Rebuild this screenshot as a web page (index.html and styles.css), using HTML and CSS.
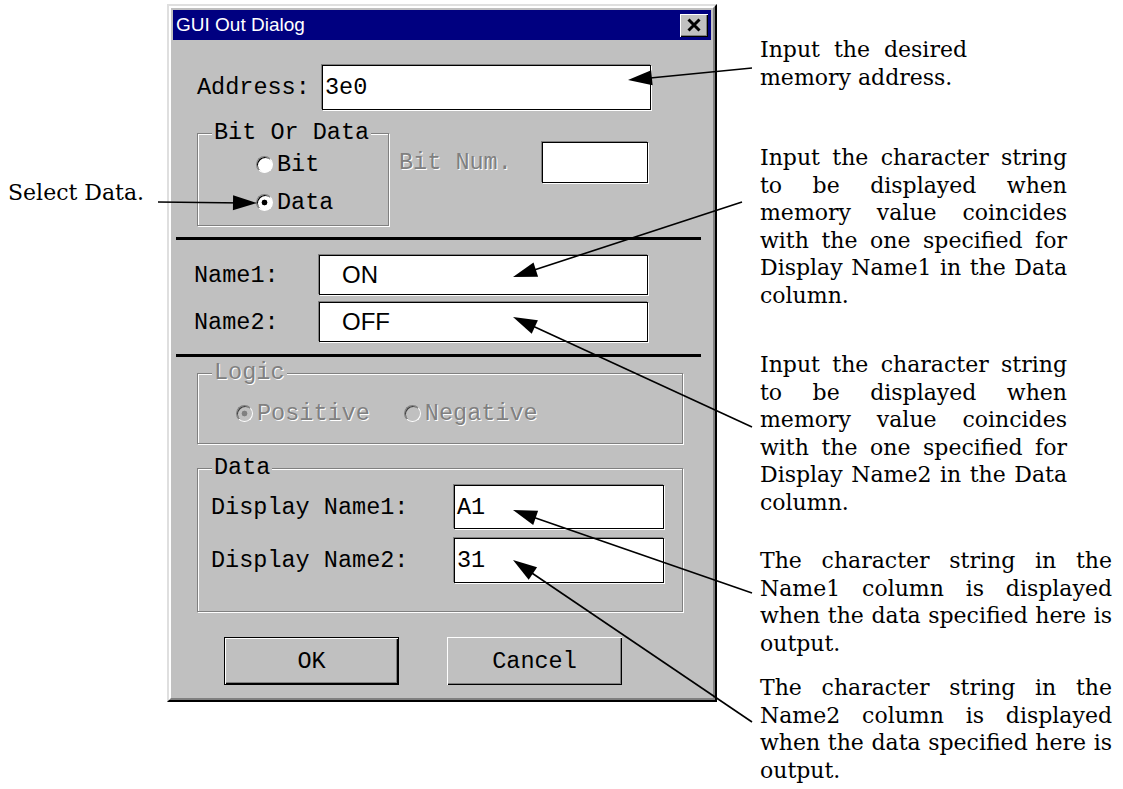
FILE: index.html
```html
<!DOCTYPE html>
<html lang="en">
<head>
    <meta charset="UTF-8">
    <title>GUI Out Dialog</title>
    <link rel="stylesheet" href="styles.css">
</head>
<body>
<div class="figure">
    <div class="side-note">Select Data.</div>

    <div class="dialog">
        <div class="dialog-inner">
            <div class="caption">
                <span>GUI Out Dialog</span>
                <span class="close-btn">
                    <svg width="16" height="14" viewBox="0 0 16 14"><path d="M2.5 1.5 L13.5 12.5 M13.5 1.5 L2.5 12.5" stroke="#000" stroke-width="3" fill="none"/></svg>
                </span>
            </div>
            <div class="dialog-body">
                <div class="row row-address">
                    <span class="label label-address">Address:</span>
                    <div class="edit edit-address">3e0</div>
                </div>

                <div class="row row-bit">
                    <div class="group group-bit">
                        <span class="group-title">Bit Or Data</span>
                        <div class="radio-line"><span class="radio"></span>Bit</div>
                        <div class="radio-line"><span class="radio checked"></span>Data</div>
                    </div>
                    <div class="bitnum">
                        <span class="label label-bitnum disabled">Bit Num.</span>
                        <div class="edit edit-bitnum"></div>
                    </div>
                </div>

                <div class="rule rule-1"></div>

                <div class="row row-name row-name1">
                    <span class="label label-name">Name1:</span>
                    <div class="edit edit-name">ON</div>
                </div>
                <div class="row row-name row-name2">
                    <span class="label label-name">Name2:</span>
                    <div class="edit edit-name">OFF</div>
                </div>

                <div class="rule rule-2"></div>

                <div class="group group-logic">
                    <span class="group-title disabled">Logic</span>
                    <div class="radio-row disabled">
                        <span class="radio-item"><span class="radio checked off"></span>Positive</span>
                        <span class="radio-item"><span class="radio off"></span>Negative</span>
                    </div>
                </div>

                <div class="group group-data">
                    <span class="group-title">Data</span>
                    <div class="data-line data-line1">
                        <span class="label label-data">Display Name1:</span>
                        <div class="edit edit-data">A1</div>
                    </div>
                    <div class="data-line data-line2">
                        <span class="label label-data">Display Name2:</span>
                        <div class="edit edit-data">31</div>
                    </div>
                </div>

                <div class="buttons">
                    <div class="btn btn-default">OK</div>
                    <div class="btn">Cancel</div>
                </div>
            </div>
        </div>
    </div>

    <div class="notes">
        <div class="note note-1">
            <span class="ln ln-first">Input the desired</span>
            <span class="ln ln-end">memory address.</span>
        </div>
        <div class="note note-2">
            <span class="ln">Input the character string</span>
            <span class="ln">to be displayed when</span>
            <span class="ln">memory value coincides</span>
            <span class="ln">with the one specified for</span>
            <span class="ln">Display Name1 in the Data</span>
            <span class="ln ln-end">column.</span>
        </div>
        <div class="note note-3">
            <span class="ln">Input the character string</span>
            <span class="ln">to be displayed when</span>
            <span class="ln">memory value coincides</span>
            <span class="ln">with the one specified for</span>
            <span class="ln">Display Name2 in the Data</span>
            <span class="ln ln-end">column.</span>
        </div>
        <div class="note note-4">
            <span class="ln">The character string in the</span>
            <span class="ln">Name1 column is displayed</span>
            <span class="ln">when the data specified here is</span>
            <span class="ln ln-end">output.</span>
        </div>
        <div class="note note-5">
            <span class="ln">The character string in the</span>
            <span class="ln">Name2 column is displayed</span>
            <span class="ln">when the data specified here is</span>
            <span class="ln ln-end">output.</span>
        </div>
    </div>

    <!-- leader lines drawn over the figure -->
    <svg class="arrows" width="1123" height="789" viewBox="0 0 1123 789">
        <g stroke="#000" stroke-width="1.6">
            <line x1="752" y1="68" x2="640" y2="79"/>
            <line x1="158" y1="202" x2="245" y2="203"/>
            <line x1="742" y1="202" x2="525" y2="273"/>
            <line x1="752" y1="427" x2="524" y2="322"/>
            <line x1="752" y1="593" x2="524" y2="514"/>
            <line x1="752" y1="722" x2="523" y2="567"/>
        </g>
        <g fill="#000">
            <polygon points="628,80 651.2,70.2 652.6,85.2"/>
            <polygon points="257,203 232.9,210.3 233.1,195.3"/>
            <polygon points="513,277 533.5,262.4 538.1,276.7"/>
            <polygon points="513,317 537.9,320.2 531.7,333.8"/>
            <polygon points="513,510 538.1,510.8 533.2,525"/>
            <polygon points="513,560 537.1,567.3 528.7,579.7"/>
        </g>
    </svg>
</div>
</body>
</html>
```

FILE: styles.css
```css
* {
    margin: 0;
    padding: 0;
    box-sizing: border-box;
}
body {
    background: #fff;
    color: #000;
    font-family: "DejaVu Serif", "Liberation Serif", serif;
}
.figure {
    position: relative;
    width: 1123px;
    height: 789px;
    display: flex;
    overflow: hidden;
}
.side-note {
    width: 167px;
    flex-shrink: 0;
    padding: 179px 0 0 8px;
    font-size: 22px;
    line-height: 27.5px;
}

/* dialog window */
.dialog {
    margin-top: 4px;
    width: 550px;
    height: 698px;
    flex-shrink: 0;
    background: #c0c0c0;
    border: 2px solid;
    border-color: #dfdfdf #000 #000 #dfdfdf;
}
.dialog-inner {
    height: 100%;
    border: 2px solid;
    border-color: #fff #808080 #808080 #fff;
    padding: 2px;
    display: flex;
    flex-direction: column;
}
.caption {
    height: 30px;
    flex-shrink: 0;
    background: #000080;
    color: #fff;
    font: 19px "Liberation Sans", Arial, sans-serif;
    display: flex;
    align-items: center;
    justify-content: space-between;
    padding: 0 3px;
}
.close-btn {
    width: 28px;
    height: 23px;
    background: #c0c0c0;
    box-shadow: inset 1px 1px 0 #fff, inset -1px -1px 0 #000, inset -2px -2px 0 #808080;
    display: flex;
    align-items: center;
    justify-content: center;
}
.dialog-body {
    flex: 1;
    display: flex;
    flex-direction: column;
    font: 23.5px "Liberation Mono", "Courier New", monospace;
}
.row {
    display: flex;
    align-items: center;
}
.label {
    white-space: nowrap;
}
.disabled {
    color: #808080;
    text-shadow: 1px 1px 0 #fff;
}
.edit {
    background: #fff;
    border: 1px solid #000;
    box-shadow: -1px -1px 0 #808080, 1px 1px 0 #fff;
    display: flex;
    align-items: center;
    padding-left: 2px;
    flex-shrink: 0;
}

.row-address {
    margin: 25px 0 0 24px;
    height: 45px;
}
.label-address {
    width: 125px;
}
.edit-address {
    width: 329px;
    height: 45px;
}

/* group boxes */
.group {
    border: 1px solid #808080;
    box-shadow: inset 1px 1px 0 #fff, 1px 1px 0 #fff;
    flex-shrink: 0;
}
.group-title {
    display: block;
    width: max-content;
    margin: -13px 0 0 14px;
    padding: 0 2px;
    background: #c0c0c0;
    line-height: 24px;
}

.row-bit {
    margin: 23px 0 0 24px;
    align-items: flex-start;
}
.group-bit {
    width: 192px;
    height: 93px;
}
.radio-line {
    height: 38px;
    display: flex;
    align-items: center;
    padding-left: 58px;
}
.radio {
    width: 17px;
    height: 17px;
    flex-shrink: 0;
    margin-right: 4px;
    border-radius: 50%;
    background: #fff;
    border: 1px solid;
    border-color: #808080 #fff #fff #808080;
    box-shadow: inset 1px 1px 0 #000;
}
.radio.checked {
    background: radial-gradient(circle, #000 0 2.6px, #fff 3.2px);
}
.radio.off {
    background: #c0c0c0;
    box-shadow: inset 1px 1px 0 #404040;
}
.radio.checked.off {
    background: radial-gradient(circle, #808080 0 2.6px, #c0c0c0 3.2px);
}
.bitnum {
    display: flex;
    align-items: center;
    margin: 9px 0 0 10px;
    height: 41px;
}
.label-bitnum {
    width: 143px;
}
.edit-bitnum {
    width: 106px;
    height: 41px;
}

.rule {
    height: 3px;
    width: 525px;
    margin-left: 3px;
    background: #000;
    flex-shrink: 0;
}
.rule-1 {
    margin-top: 11px;
}
.rule-2 {
    margin-top: 12px;
}

.row-name {
    margin-left: 21px;
    height: 40px;
}
.row-name1 {
    margin-top: 15px;
}
.row-name2 {
    margin-top: 7px;
}
.label-name {
    width: 125px;
}
.edit-name {
    width: 329px;
    height: 40px;
    padding-left: 22px;
    font: 24px "Liberation Sans", Arial, sans-serif;
}

.group-logic {
    margin: 16px 0 0 24px;
    width: 486px;
    height: 71px;
}
.radio-row {
    height: 56px;
    display: flex;
    align-items: center;
    gap: 34px;
    padding-left: 38px;
}
.radio-item {
    display: flex;
    align-items: center;
}

.group-data {
    margin: 24px 0 0 24px;
    width: 486px;
    height: 144px;
}
.data-line {
    display: flex;
    align-items: center;
    padding-left: 13px;
}
.data-line1 {
    margin-top: 5px;
    height: 44px;
}
.data-line2 {
    margin-top: 9px;
    height: 45px;
}
.label-data {
    width: 243px;
}
.edit-data {
    width: 210px;
    height: 100%;
}

.buttons {
    display: flex;
    gap: 48px;
    margin: 25px 0 0 51px;
}
.btn {
    width: 175px;
    height: 48px;
    display: flex;
    align-items: center;
    justify-content: center;
    background: #c0c0c0;
    box-shadow: inset 1px 1px 0 #fff, inset -1px -1px 0 #000, inset -2px -2px 0 #808080;
}
.btn-default {
    border: 1px solid #000;
}

/* callout texts */
.notes {
    margin-left: 43px;
    font-size: 22px;
    line-height: 27.5px;
}
.ln {
    display: block;
    text-align: justify;
    text-align-last: justify;
}
.ln-end {
    text-align-last: left;
}
.note-1 {
    margin-top: 36px;
    width: 207px;
}
.note-2 {
    margin-top: 53px;
    width: 307px;
}
.note-3 {
    margin-top: 42px;
    width: 307px;
}
.note-4 {
    margin-top: 31px;
    width: 352px;
}
.note-5 {
    margin-top: 17px;
    width: 352px;
}
.arrows {
    position: absolute;
    left: 0;
    top: 0;
    pointer-events: none;
}
```
